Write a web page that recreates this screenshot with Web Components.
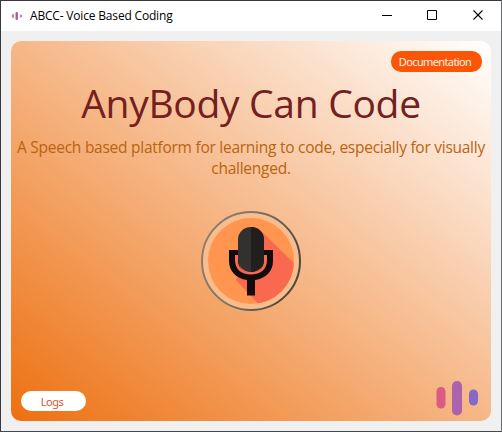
<!DOCTYPE html>
<html lang="en">
<head>
<meta charset="utf-8">
<title>ABCC- Voice Based Coding</title>
<style>
html,body{margin:0;height:100%;overflow:hidden}
body{font-family:"Open Sans","Noto Sans",sans-serif}
</style>
</head>
<body>
<app-window>
  <title-bar slot="bar">ABCC- Voice Based Coding</title-bar>
  <hero-card>
    <pill-button slot="top" class="doc">Documentation</pill-button>
    <hero-heading>AnyBody Can Code<span slot="sub">A Speech based platform for learning to code, especially for visually</span><span slot="sub2">challenged.</span></hero-heading>
    <mic-button></mic-button>
    <pill-button slot="bottom" class="logs">Logs</pill-button>
    <voice-logo slot="bottom"></voice-logo>
  </hero-card>
</app-window>
<script>
const define = (name, html) => customElements.define(name, class extends HTMLElement {
  constructor() {
    super();
    this.attachShadow({mode: "open"}).innerHTML = html;
  }
});

define("app-window", `<style>
:host{display:flex;flex-direction:column;box-sizing:border-box;width:502px;height:432px;background:#f0f0f0;border:1px solid #39373c;border-right-color:#6d6e72;border-bottom-color:#48484a}
main{flex:1;padding:10px;display:flex}
</style><slot name="bar"></slot><main><slot></slot></main>`);

define("title-bar", `<style>
:host{display:flex;align-items:center;height:30px;background:#fff;color:#000;font-size:12px;letter-spacing:-.18px}
.icon{margin:0 8px 0 11px}
.t{flex:1;white-space:nowrap;padding-bottom:1px}
.controls{display:flex}
.controls svg{display:block}
</style>
<svg class="icon" width="10" height="10" viewBox="0 0 10 10"><rect x="0" y="3" width="2" height="4" rx="1" fill="#cb7baa"/><rect x="3.500" y="1" width="2.400" height="8" rx="1" fill="#a35d9e"/><rect x="8" y="3.500" width="2" height="3" rx="1" fill="#9382c4"/></svg>
<span class="t"><slot></slot></span>
<div class="controls"><svg width="136" height="30" viewBox="0 0 136 30" fill="none" stroke="#000"><path d="M17 14.500h10M62.500 9.500h9v9h-9z"/><path d="M108.500 9.500l9 9m0-9l-9 9" stroke-width="1.1"/></svg></div>`);

define("hero-card", `<style>
:host{display:flex;flex-direction:column;box-sizing:border-box;width:480px;height:380px;border-radius:10px;background:linear-gradient(to top right,#ed7010,#fff)}
.top{display:flex;justify-content:flex-end;padding:10px 9px 0 0;height:21px}
.mid{flex:1;display:flex;flex-direction:column;align-items:center}
.bottom{display:flex;justify-content:space-between;align-items:flex-end;padding:0 12px 5px 10px}
</style><div class="top"><slot name="top"></slot></div><div class="mid"><slot></slot></div><div class="bottom"><slot name="bottom"></slot></div>`);

define("pill-button", `<style>
:host{display:flex;align-items:center;justify-content:center;box-sizing:border-box;border-radius:10px;font:11px/15px "Noto Sans",sans-serif;white-space:nowrap}
:host(.doc){width:91px;height:21px;background:#fb5607;color:#fff0e2;padding:0 3px 0 0;letter-spacing:-.62px}
:host(.logs){width:65px;height:20px;background:#fff;color:#e0532a;padding:1px 3px 0 0;letter-spacing:-.5px;margin-bottom:5px}
</style><slot></slot>`);

define("hero-heading", `<style>
:host{display:block;width:480px;text-align:center;white-space:nowrap}
h1{margin:3px 0 0;font-size:39px;font-weight:400;line-height:56px;color:#74201f;letter-spacing:-.3px}
p{margin:6px 0 0;font-size:15.500px;line-height:21px;color:#b9640f;letter-spacing:-.26px}
p+p{margin:0}
</style><h1><slot></slot></h1><p><slot name="sub"></slot></p><p><slot name="sub2"></slot></p>`);

define("mic-button", `<style>
:host{display:block;width:102px;height:102px;margin-top:31px}
svg{display:block}
</style><svg width="102" height="102" viewBox="200 210 102 102">
<defs><linearGradient id="ring" x1="0" y1="0" x2="1" y2=".35"><stop offset="0" stop-color="#93806f"/><stop offset=".5" stop-color="#807468"/><stop offset="1" stop-color="#504840"/></linearGradient>
<clipPath id="disc"><circle cx="251" cy="261" r="43"/></clipPath></defs>
<circle cx="251" cy="261" r="49" fill="#f9bd8d" stroke="url(#ring)" stroke-width="2"/>
<circle cx="251" cy="261" r="43" fill="#ff954f"/>
<path clip-path="url(#disc)" d="M260 230L300 269V310H264L236 280Z" fill="#f8694f"/>
<path d="M229 250h10v10c0 9 5 13.500 12 13.500s12-4.500 12-13.500v-10h10v11c0 10-7 17.500-18 19v15.500h-8v-15.500c-11-1.500-18-9-18-19z" fill="#120d0c"/>
<path d="M235 255v5c0 9 6 14.500 16 14.500s16-5.500 16-14.500v-5h-3v5c0 8-5 12.500-13 12.500s-13-4.500-13-12.500v-5z" fill="#f8694f"/>
<rect x="238" y="227" width="26" height="45" rx="12.500" fill="#333130"/>
<path d="M251 227c7 0 13 5.500 13 12.500v20c0 7-6 12.500-13 12.500z" fill="#211f1e"/>
</svg>`);

define("voice-logo", `<style>
:host{display:block;width:44px;height:36px}
svg{display:block}
</style><svg width="44" height="36" viewBox="435 380 44 36"><rect x="436.500" y="387" width="9" height="21.500" rx="4.500" fill="#dc5b83"/><rect x="452" y="381" width="10" height="34.500" rx="5" fill="#ac62ac"/><rect x="469" y="389.500" width="9" height="16" rx="4.500" fill="#8569c9"/></svg>`);
</script>
</body>
</html>
